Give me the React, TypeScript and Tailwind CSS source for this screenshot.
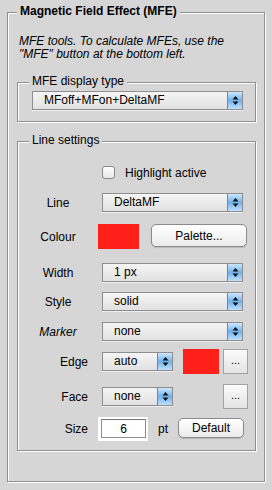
import type { ReactNode } from "react";

const Arrows = () => (
  <svg width="7" height="11" viewBox="0 0 7 11">
    <polygon points="3.5,1 6.5,4.5 0.5,4.5" fill="#111" />
    <polygon points="0.5,6.5 6.5,6.5 3.5,10" fill="#111" />
  </svg>
);

function Popup({ value, w }: { value: string; w: string }) {
  return (
    <div className={`flex ${w} h-[19px] border border-[#8e8e8e] bg-linear-to-b from-[#f5f5f5] to-[#e1e1e1] shadow-[0_1px_0_rgba(255,255,255,0.6)]`}>
      <span className="flex-1 pl-[11px] leading-[17px] truncate">{value}</span>
      <span className="w-[15px] flex items-center justify-center border-l border-[#6d87a9] bg-linear-to-b from-[#cfe7fb] via-[#6fb2ee] to-[#bfe0fb]">
        <Arrows />
      </span>
    </div>
  );
}

function Group({ title, titleCls, className, children }: { title: string; titleCls: string; className: string; children: ReactNode }) {
  return (
    <div className={`relative border border-[#8f8f8f] shadow-[1px_1px_0_#fff,inset_1px_1px_0_#fff] ${className}`}>
      <span className={`absolute -top-[9px] px-[3px] bg-[#d6d6d6] leading-[14px] ${titleCls}`}>{title}</span>
      {children}
    </div>
  );
}

const Swatch = ({ cls }: { cls: string }) => <div className={`bg-[#ff2119] ${cls}`} />;

const Dots = () => (
  <button className="w-[25px] h-[25px] border border-[#a2a2a2] bg-linear-to-b from-[#fbfbfb] to-[#e4e4e4] flex items-center justify-center text-[11px] leading-none pb-[2px]">
    ...
  </button>
);

export default function App() {
  return (
    <div className="w-[272px] h-[490px] bg-[#d6d6d6] pt-[12px] pl-[7px] text-[12px] text-black font-['Liberation_Sans',Arial,sans-serif]">
      <Group title="Magnetic Field Effect (MFE)" titleCls="left-[9px] font-bold" className="w-[258px] h-[470px]">
        <p className="pt-[22px] pl-[11px] italic leading-[13px]">
          MFE tools. To calculate MFEs, use the
          <br />
          "MFE" button at the bottom left.
        </p>

        <Group title="MFE display type" titleCls="left-[11px]" className="mt-[21px] ml-[9px] w-[239px] h-[40px]">
          <div className="mt-[8px] ml-[14px]">
            <Popup value="MFoff+MFon+DeltaMF" w="w-[211px]" />
          </div>
        </Group>

        <Group title="Line settings" titleCls="left-[11px]" className="mt-[19px] ml-[9px] w-[239px] h-[310px]">
          <div className="flex flex-col pt-[24px]">
            {/* Highlight */}
            <div className="flex items-center h-[13px] pl-[84px]">
              <span className="w-[13px] h-[13px] rounded-[3px] border border-[#8a8a8a] bg-linear-to-b from-white to-[#e8e8e8]" />
              <span className="ml-[10px]">Highlight active</span>
            </div>

            <div className="flex items-center h-[19px] mt-[14px]">
              <span className="w-[80px] text-center">Line</span>
              <div className="ml-[4px]"><Popup value="DeltaMF" w="w-[141px]" /></div>
            </div>

            <div className="flex items-start h-[25px] mt-[12px]">
              <span className="w-[80px] text-center self-center">Colour</span>
              <Swatch cls="w-[41px] h-[25px]" />
              <button className="ml-[12px] w-[96px] h-[23px] rounded-[5px] border border-[#8b8b8b] bg-linear-to-b from-white to-[#ebebeb] shadow-[0_1px_1px_rgba(0,0,0,0.15)]">
                Palette...
              </button>
            </div>

            <div className="flex items-center h-[19px] mt-[14px]">
              <span className="w-[80px] text-center">Width</span>
              <div className="ml-[4px]"><Popup value="1 px" w="w-[141px]" /></div>
            </div>

            <div className="flex items-center h-[19px] mt-[10px]">
              <span className="w-[80px] text-center">Style</span>
              <div className="ml-[4px]"><Popup value="solid" w="w-[141px]" /></div>
            </div>

            <div className="flex items-center h-[19px] mt-[11px]">
              <span className="w-[80px] text-center italic">Marker</span>
              <div className="ml-[4px]"><Popup value="none" w="w-[141px]" /></div>
            </div>

            <div className="flex items-center h-[25px] mt-[8px]">
              <span className="w-[70px] text-right">Edge</span>
              <div className="ml-[14px]"><Popup value="auto" w="w-[71px]" /></div>
              <Swatch cls="ml-[10px] w-[36px] h-[25px]" />
              <div className="ml-[4px]"><Dots /></div>
            </div>

            <div className="flex items-center h-[25px] mt-[10px]">
              <span className="w-[70px] text-right">Face</span>
              <div className="ml-[14px]"><Popup value="none" w="w-[71px]" /></div>
              <div className="ml-[50px]"><Dots /></div>
            </div>

            <div className="flex items-start h-[24px] mt-[8px]">
              <span className="w-[70px] text-right self-center">Size</span>
              <div className="ml-[10px] w-[50px] h-[24px] bg-white pt-[2px] pl-[3px] pr-[2px] pb-[3px]">
                <div className="h-full border border-[#8e8e8e] border-t-[#777] flex items-center justify-center leading-none">6</div>
              </div>
              <span className="ml-[10px] self-center">pt</span>
              <button className="ml-[10px] mt-[1px] w-[66px] h-[20px] rounded-[5px] border border-[#8b8b8b] bg-linear-to-b from-white to-[#ebebeb] shadow-[0_1px_1px_rgba(0,0,0,0.15)] leading-none">
                Default
              </button>
            </div>
          </div>
        </Group>
      </Group>
    </div>
  );
}
